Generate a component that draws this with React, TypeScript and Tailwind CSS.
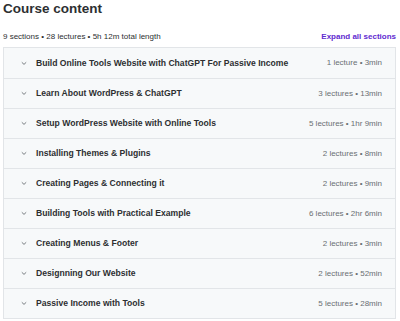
import React from "react";

const sections = [
  ["Build Online Tools Website with ChatGPT For Passive Income", "1 lecture • 3min"],
  ["Learn About WordPress & ChatGPT", "3 lectures • 13min"],
  ["Setup WordPress Website with Online Tools", "5 lectures • 1hr 9min"],
  ["Installing Themes & Plugins", "2 lectures • 8min"],
  ["Creating Pages & Connecting it", "2 lectures • 9min"],
  ["Building Tools with Practical Example", "6 lectures • 2hr 6min"],
  ["Creating Menus & Footer", "2 lectures • 3min"],
  ["Designning Our Website", "2 lectures • 52min"],
  ["Passive Income with Tools", "5 lectures • 28min"],
];

function Chevron() {
  return (
    <svg width="6" height="5" viewBox="0 0 6 5" className="shrink-0">
      <path d="M0.8 1.3 L3 3.4 L5.2 1.3" fill="none" stroke="#6a6f73" strokeWidth="0.9" />
    </svg>
  );
}

export default function App() {
  return (
    <div className="w-[400px] h-[321px] bg-white overflow-hidden" style={{ fontFamily: "'Liberation Sans', Arial, sans-serif" }}>
      <div className="pl-[3px] pr-[4px]">
        <h2 className="text-[13.5px] leading-[16px] font-bold text-[#2d2f31] pt-[1px]">Course content</h2>
        <div className="flex justify-between items-end mt-[14px] h-[11px]">
          <span className="text-[8px] leading-[10px] text-[#2d2f31]">9 sections • 28 lectures • 5h 12m total length</span>
          <span className="text-[8px] leading-[10px] font-bold text-[#5f2bd0]">Expand all sections</span>
        </div>
        <div className="mt-[5px] border border-[#e2e5e8]">
          {sections.map(([t, m], i) => (
            <div
              key={i}
              className={"h-[30px] flex items-center bg-[#f7f9fa] pl-[17px] pr-[13px] " + (i > 0 ? "border-t border-[#e2e5e8]" : "")}
            >
              <Chevron />
              <span className="ml-[9px] text-[8.6px] font-bold text-[#2d2f31] flex-1">{t}</span>
              <span className="text-[8px] text-[#6a6f73]">{m}</span>
            </div>
          ))}
        </div>
      </div>
    </div>
  );
}
